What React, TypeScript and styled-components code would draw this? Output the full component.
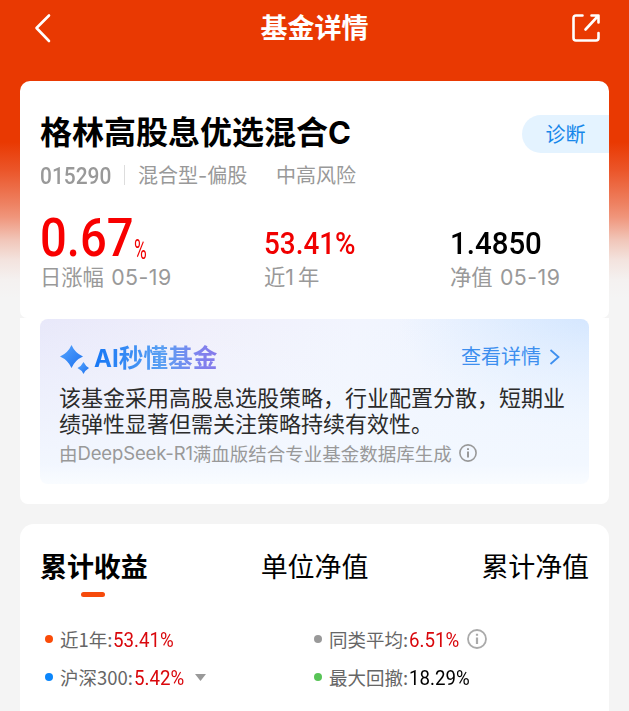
import React from "react";
import styled, { createGlobalStyle } from "styled-components";

const Global = createGlobalStyle`
  * { box-sizing: border-box; }
  body { margin: 0; background: #f4f4f4; font-family: "Noto Sans CJK SC", sans-serif; color: #000; }
  #root { overflow: hidden; height: 711px; }
`;

const Page = styled.main`
  width: 629px;
  height: 711px;
  padding: 0 20px;
  overflow: hidden;
  background: linear-gradient(#e93902 0, #e93902 142px, #eb5529 170px, #ee8364 205px, #f0957b 217px, #f1c6b9 240px, #f3e3de 260px, #f4f1f0 280px, #f4f4f4 298px);
`;

const Header = styled.header`
  height: 81px;
  display: grid;
  grid-template-columns: 60px 1fr 60px;
  padding: 7px 8px 0 14px;
  align-items: start;
  color: #fff;
  svg { display: block; margin-top: 6px; }
  svg:last-child { justify-self: end; }
`;

const PageTitle = styled.h1`
  margin: 0;
  font-size: 27px;
  line-height: 40px;
  font-weight: 700;
  text-align: center;
  padding-right: 6px;
`;

const Summary = styled.section`
  height: 237px;
  border-radius: 10px 10px 7px 7px;
  background: #fff;
  padding: 27px 0 0 20px;
`;

const NameRow = styled.div`
  display: flex;
  justify-content: space-between;
  align-items: flex-start;
  height: 51px;
`;

const FundName = styled.h2`
  margin: 0;
  font-size: 32px;
  line-height: 44px;
  font-weight: 700;
`;

/* Latin letters and digits set beside Chinese text. */
const Latin = styled.span<{ $size?: number; $spacing?: number }>`
  font-family: Inter, sans-serif;
  font-size: ${(p) => (p.$size ? `${p.$size}px` : "inherit")};
  letter-spacing: ${(p) => p.$spacing ?? 0}px;
  line-height: 1;
`;

const Diagnose = styled.button`
  border: 0;
  width: 87px;
  height: 38px;
  margin-top: 7px;
  padding: 0 0 1px;
  border-radius: 19px 0 0 19px;
  background: #e4f3ff;
  color: #1687ea;
  font: 400 20px/36px "Noto Sans CJK SC", sans-serif;
`;

const MetaRow = styled.div`
  display: flex;
  height: 32px;
  align-items: center;
  color: #999;
  font-size: 20px;
  line-height: 32px;
`;

const Code = styled.span`
  width: 85px;
  height: 20px;
  border-right: 1px solid #ddd;
  line-height: 22px;
  margin-right: 13px;
`;

const Kind = styled.span`
  width: 138px;
`;

/* Digits narrowed horizontally around their left edge. */
const Digits = styled.span<{ $size: number; $scale?: number; $weight?: number }>`
  display: inline-block;
  font-family: Roboto, sans-serif;
  font-size: ${(p) => p.$size}px;
  font-weight: ${(p) => p.$weight ?? 500};
  transform: scaleX(${(p) => p.$scale ?? 1});
  transform-origin: left;
  white-space: nowrap;
`;

const Stats = styled.div`
  display: grid;
  grid-template-columns: 224px 186px 1fr;
  margin-top: 22px;
`;

const StatValue = styled.div<{ $red?: boolean }>`
  height: 49px;
  display: flex;
  align-items: flex-end;
  color: ${(p) => (p.$red ? "#f00000" : "#000")};
  line-height: 38px;
`;

const BigDigits = styled.span`
  width: 94px;
  line-height: 26px;
  color: #f80000;
`;

const Percent = styled.span`
  line-height: 20px;
`;

const StatLabel = styled.div`
  font-size: 21.3px;
  line-height: 28px;
  color: #999;
  white-space: nowrap;
  word-spacing: 2.5px;
`;

const AiSection = styled.section`
  height: 186px;
  border-radius: 0 0 8px 8px;
  background: #fff;
  padding: 1px 20px 0;
`;

const AiPanel = styled.div`
  height: 165px;
  border-radius: 8px;
  padding: 18px 20px 0 19px;
  background:
    linear-gradient(to bottom, rgba(244, 249, 255, 0) 0%, rgba(243, 248, 255, 0.9) 88%, #f9fcff 100%),
    radial-gradient(ellipse 190px 110px at 100% 0, #d5e7ff, rgba(213, 231, 255, 0)),
    linear-gradient(100deg, #e8e8fa 0%, #f0effb 28%, #f2f5fe 55%, #eaf3ff 100%);
`;

const AiHead = styled.div`
  display: flex;
  height: 38px;
  align-items: center;
  > svg { margin-top: 5px; }
`;

const AiTitle = styled.h3`
  margin: 0 auto 0 4px;
  font-size: 24.7px;
  line-height: 36px;
  font-weight: 700;
  color: transparent;
  background: linear-gradient(90deg, #1677f5, #5aa0f3 55%, #7f83ee 85%, #8579ea);
  background-clip: text;
`;

const More = styled.a`
  display: flex;
  align-items: center;
  gap: 8px;
  margin-right: 8px;
  font-size: 20px;
  line-height: 34px;
  color: #3d8fef;
  svg { margin-top: 2px; }
`;

const AiText = styled.p`
  margin: 8px -4px 0 0;
  font-size: 22px;
  line-height: 26px;
  color: #2b2b2b;
  white-space: nowrap;
`;

const Source = styled.div`
  display: flex;
  align-items: center;
  margin-top: 4px;
  font-size: 18.5px;
  line-height: 28px;
  color: #999;
  white-space: nowrap;
  svg { margin-left: 7px; }
`;

const Performance = styled.section`
  height: 220px;
  margin-top: 20px;
  padding: 20px 20px 0;
  border-radius: 14px 14px 0 0;
  background: #fff;
`;

const Tabs = styled.nav`
  display: flex;
  justify-content: space-between;
  height: 76px;
`;

const Tab = styled.div<{ $active?: boolean }>`
  font-size: 27px;
  line-height: 43px;
  font-weight: ${(p) => (p.$active ? 700 : 400)};
  letter-spacing: -0.1px;
  &::after {
    content: "";
    display: ${(p) => (p.$active ? "block" : "none")};
    width: 24px;
    height: 5px;
    margin: 5px 0 0 41px;
    border-radius: 3px;
    background: #f64a0b;
  }
`;

const Legend = styled.div`
  display: grid;
  grid-template-columns: 269px 1fr;
  grid-auto-rows: 38px;
  padding-left: 5px;
`;

const LegendItem = styled.div`
  display: flex;
  align-items: center;
  font-size: 18.5px;
  color: #666;
  white-space: nowrap;
  svg { margin-left: 7px; }
`;

const Dot = styled.i<{ $color: string }>`
  width: 8px;
  height: 8px;
  margin-right: 7px;
  border-radius: 50%;
  background: ${(p) => p.$color};
`;

const LegendValue = styled.span<{ $red?: boolean; $width: number }>`
  width: ${(p) => p.$width}px;
  margin-left: 1px;
  color: ${(p) => (p.$red ? "#d9070c" : "#000")};
`;

const Info = ({ size, color }: { size: number; color: string }) => (
  <svg width={size} height={size} viewBox="0 0 20 20" fill="none" stroke={color} strokeWidth="1.8">
    <circle cx="10" cy="10" r="9" />
    <path d="M10 8.400v6.600M10 4.800v2" strokeWidth="2.200" />
  </svg>
);

export default function App() {
  return (
    <>
      <Global />
      <Page>
        <Header>
          <svg width="18" height="30" viewBox="0 0 18 30" fill="none" stroke="#fff" strokeWidth="2.6" strokeLinecap="round" strokeLinejoin="round">
            <path d="M15 2.500 2.500 15 15 28" />
          </svg>
          <PageTitle>基金详情</PageTitle>
          <svg width="30" height="30" viewBox="0 0 30 30" fill="none" stroke="#fff" strokeWidth="2.6" strokeLinecap="round" strokeLinejoin="round">
            <path d="M11.500 2.500H5Q2.500 2.500 2.500 5v20q0 2.500 2.500 2.500h20q2.500 0 2.500-2.500v-5M20.500 2.500h7v7M27 3 14.500 16.500" />
          </svg>
        </Header>

        <Summary>
          <NameRow>
            <FundName>格林高股息优选混合<Latin $size={31}>C</Latin></FundName>
            <Diagnose>诊断</Diagnose>
          </NameRow>
          <MetaRow>
            <Code><Digits $size={23.5} $scale={0.89}>015290</Digits></Code>
            <Kind>混合型<Latin>-</Latin>偏股</Kind>
            <span>中高风险</span>
          </MetaRow>
          <Stats>
            <div>
              <StatValue $red>
                <BigDigits><Digits $size={53} $scale={0.89}>0.67</Digits></BigDigits>
                <Percent><Digits $size={28} $scale={0.62} $weight={400}>%</Digits></Percent>
              </StatValue>
              <StatLabel>日涨幅 <Latin $spacing={0.5}>05-19</Latin></StatLabel>
            </div>
            <div>
              <StatValue $red><Digits $size={32} $scale={0.87}>53.41%</Digits></StatValue>
              <StatLabel>近<Latin $spacing={4}>1</Latin>年</StatLabel>
            </div>
            <div>
              <StatValue><Digits $size={32} $scale={0.92}>1.4850</Digits></StatValue>
              <StatLabel>净值 <Latin $spacing={0.5}>05-19</Latin></StatLabel>
            </div>
          </Stats>
        </Summary>

        <AiSection>
          <AiPanel>
            <AiHead>
              <svg width="31" height="30" viewBox="0 0 31 30">
                <defs>
                  <linearGradient id="spark" x1="0" y1="0" x2="1" y2="1">
                    <stop stopColor="#58a6ff" />
                    <stop offset="1" stopColor="#1b70ee" />
                  </linearGradient>
                </defs>
                <path fill="url(#spark)" d="M12.500 1Q16 9 24 12.500Q16 16 12.500 24Q9 16 1 12.500Q9 9 12.500 1Z" />
                <path fill="url(#spark)" d="M24.500 18Q26.500 22 30 24Q26.500 26 24.500 30Q22.500 26 18.500 24Q22.500 22 24.500 18Z" />
              </svg>
              <AiTitle><Latin $size={24}>AI</Latin>秒懂基金</AiTitle>
              <More>
                查看详情
                <svg width="12" height="18" viewBox="0 0 12 18" fill="none" stroke="#3d8fef" strokeWidth="1.800">
                  <path d="m1.500 2 8 7-8 7" />
                </svg>
              </More>
            </AiHead>
            <AiText>该基金采用高股息选股策略，行业配置分散，短期业<br />绩弹性显著但需关注策略持续有效性。</AiText>
            <Source>由<Latin $size={18.5} $spacing={-0.15}>DeepSeek-R1</Latin>满血版结合专业基金数据库生成<Info size={18} color="#999" /></Source>
          </AiPanel>
        </AiSection>

        <Performance>
          <Tabs>
            <Tab $active>累计收益</Tab>
            <Tab>单位净值</Tab>
            <Tab>累计净值</Tab>
          </Tabs>
          <Legend>
            <LegendItem>
              <Dot $color="#fa4b08" />近1年:
              <LegendValue $red $width={62}><Digits $size={19.5} $weight={400} $scale={0.96}>53.41%</Digits></LegendValue>
            </LegendItem>
            <LegendItem>
              <Dot $color="#999" />同类平均:
              <LegendValue $red $width={51}><Digits $size={19.5} $weight={400} $scale={0.96}>6.51%</Digits></LegendValue>
              <Info size={20} color="#aaa" />
            </LegendItem>
            <LegendItem>
              <Dot $color="#0b86fb" />沪深300:
              <LegendValue $red $width={54}><Digits $size={19.5} $weight={400} $scale={0.96}>5.42%</Digits></LegendValue>
              <svg width="11" height="7" viewBox="0 0 11 7"><path fill="#999" d="M0 0h11L5.500 7Z" /></svg>
            </LegendItem>
            <LegendItem>
              <Dot $color="#58c457" />最大回撤:
              <LegendValue $width={62}><Digits $size={19.5} $weight={400} $scale={0.96}>18.29%</Digits></LegendValue>
            </LegendItem>
          </Legend>
        </Performance>
      </Page>
    </>
  );
}
